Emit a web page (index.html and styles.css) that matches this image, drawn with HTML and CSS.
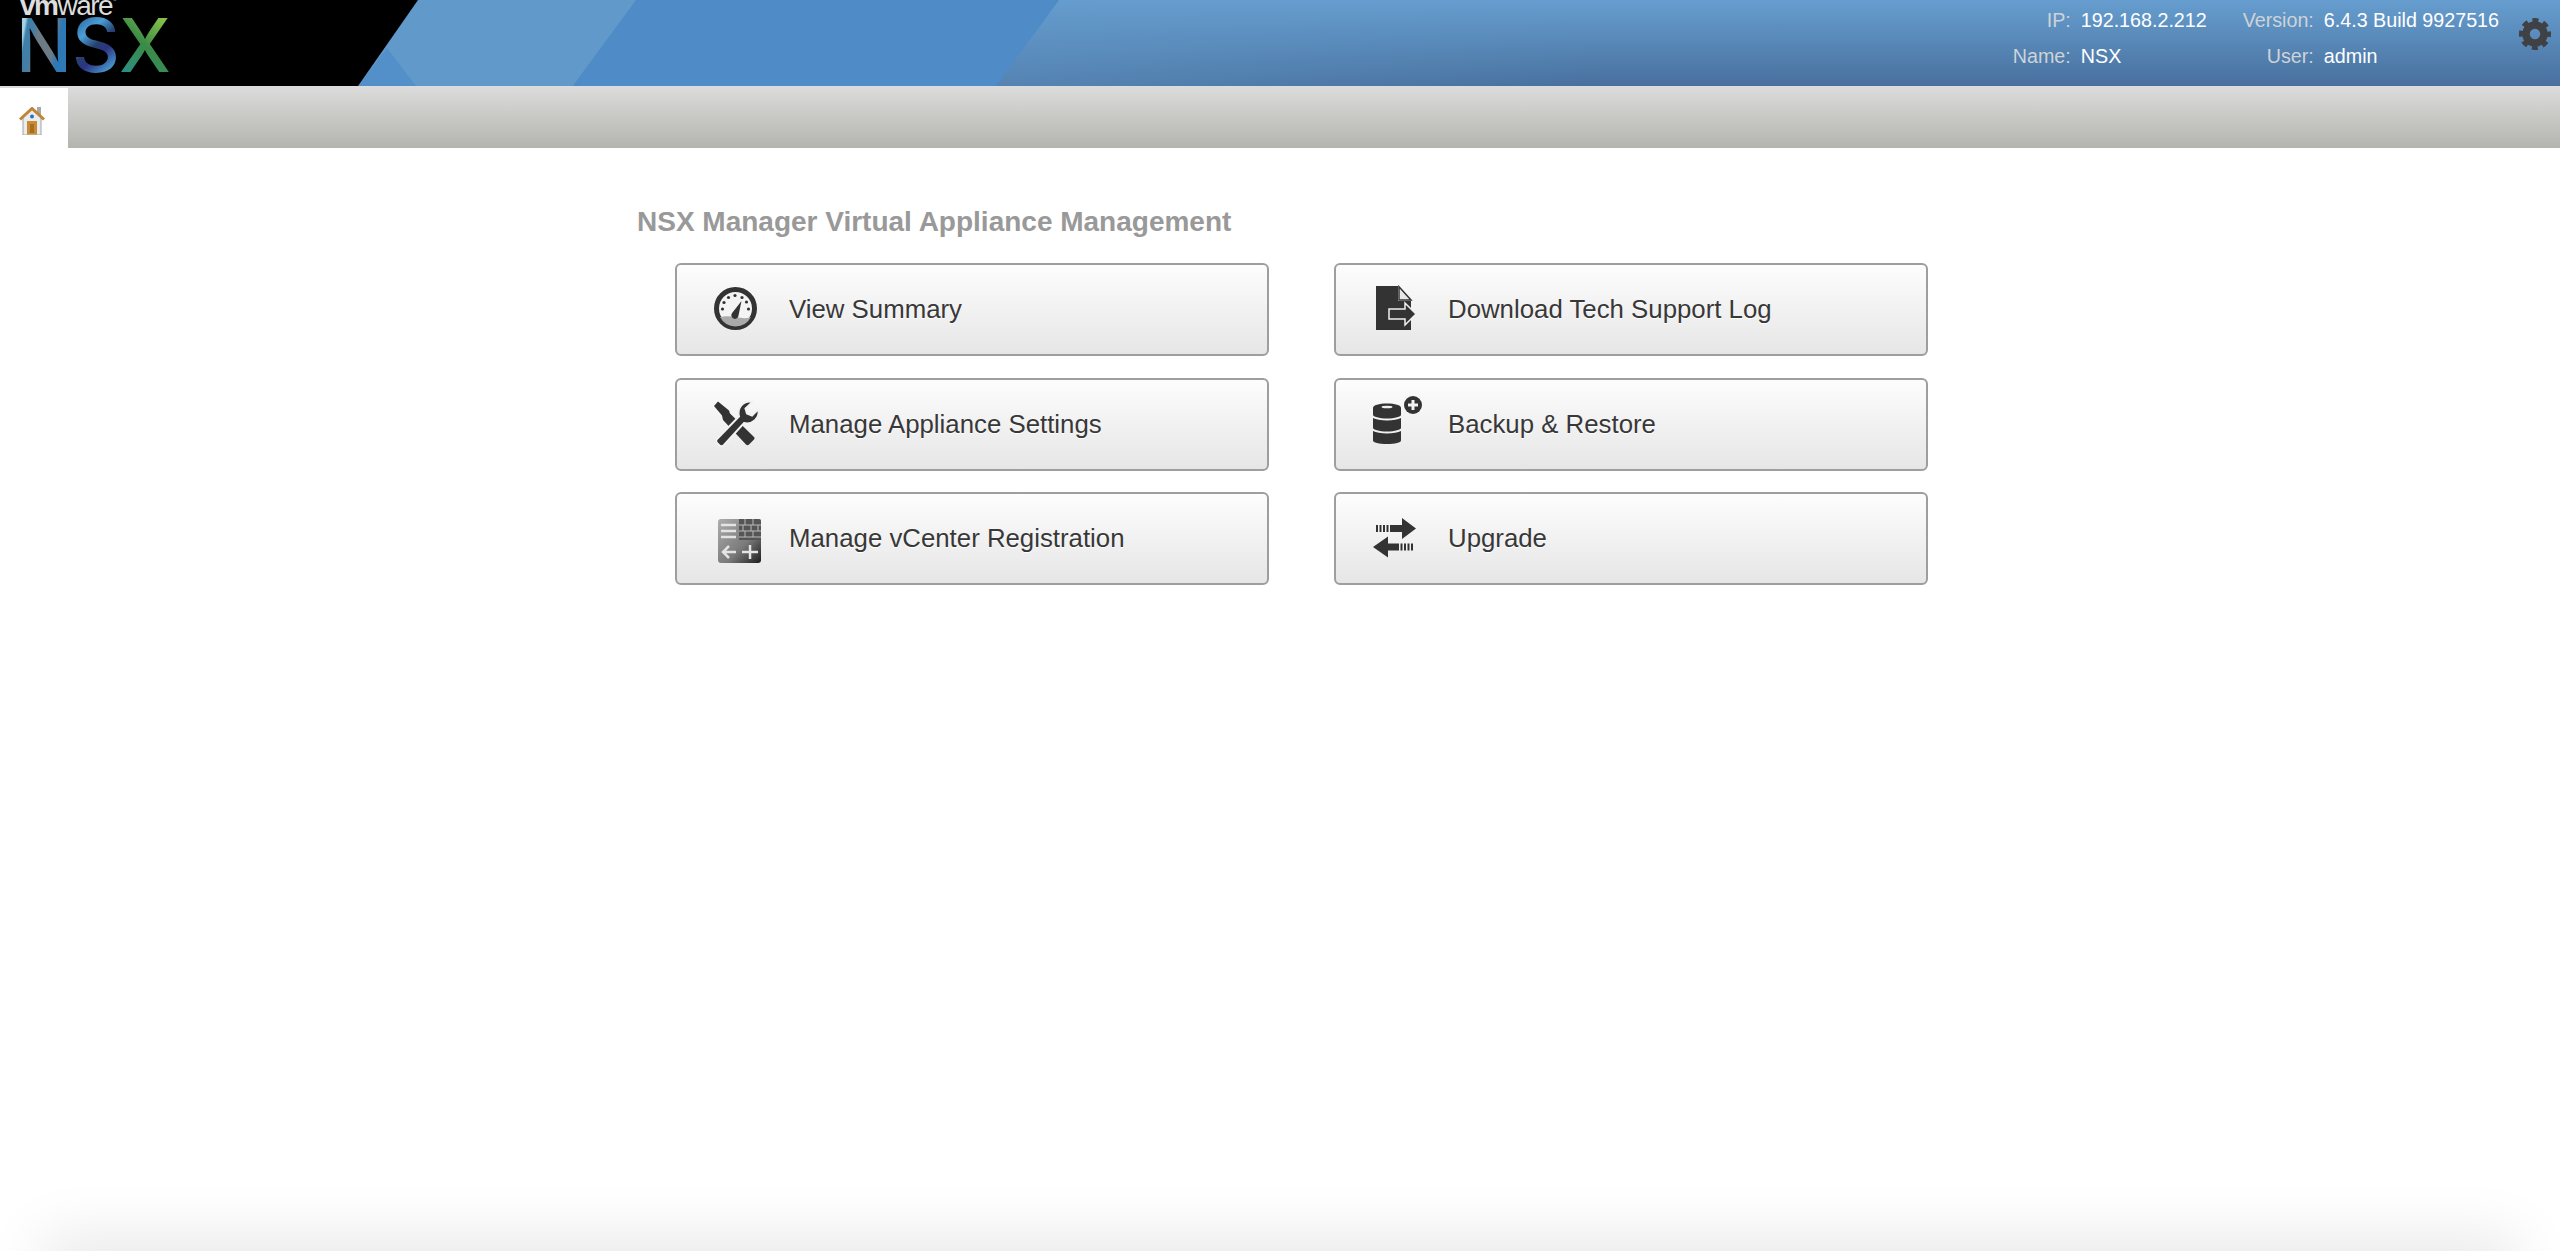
FILE: index.html
```html
<!DOCTYPE html>
<html lang="en">
  <head>
    <meta charset="UTF-8">
    <title>NSX Manager Virtual Appliance Management</title>
    <link rel="stylesheet" href="styles.css">
  </head>
  <body>
    <header class="top-bar">
      <svg class="banner-art" viewBox="0 0 1100 86" preserveAspectRatio="none" aria-hidden="true">
        <polygon points="358,86 418,0 636,0 573,86" fill="#6199cb"/>
        <polygon points="573,86 636,0 1059,0 996,86" fill="#4f8bc6"/>
        <polygon points="387,48 358,86 416,86" fill="#538fc8"/>
      </svg>
      <div class="logo">
        <span class="logo-vmware"><b>vm</b>ware<sup>®</sup></span>
        <span class="logo-nsx"><span class="n">N</span><span class="s">S</span><span class="x">X</span></span>
      </div>
      <div class="session">
        <div class="session-col">
          <div class="session-row"><span class="session-label">IP:</span><span>192.168.2.212</span></div>
          <div class="session-row"><span class="session-label">Name:</span><span>NSX</span></div>
        </div>
        <div class="session-col">
          <div class="session-row"><span class="session-label">Version:</span><span>6.4.3 Build 9927516</span></div>
          <div class="session-row"><span class="session-label">User:</span><span>admin</span></div>
        </div>
      </div>
      <svg class="gear" viewBox="0 0 32 32" aria-hidden="true">
        <circle cx="16" cy="16" r="9" fill="none" stroke="#3f4144" stroke-width="7.500"/>
        <circle cx="16" cy="16" r="13.500" fill="none" stroke="#3f4144" stroke-width="5" stroke-dasharray="5.800 4.800" stroke-dashoffset="2.900"/>
      </svg>
    </header>

    <nav class="tab-bar">
      <div class="home-tab">
        <svg class="home-icon" viewBox="0 0 26 28" aria-hidden="true">
          <rect x="18" y="0" width="4" height="8" fill="#a9a9a9"/>
          <polygon points="4,11 13,2 22,11 22,28 4,28" fill="#e9edf0" stroke="#a0a4a6"/>
          <path d="M1 12.500 13 1.500l12 11" fill="none" stroke="#bf8436" stroke-width="3"/>
          <circle cx="13" cy="9.500" r="2" fill="#2f6fc0"/>
          <rect x="8" y="14" width="10" height="13.500" fill="#c88a32"/>
          <rect x="11" y="17" width="4" height="9" fill="#a86e20"/>
        </svg>
      </div>
    </nav>

    <main class="content">
      <h1 class="page-title">NSX Manager Virtual Appliance Management</h1>
      <div class="actions">
        <a class="action">
          <svg class="action-icon" viewBox="0 0 48 48" aria-hidden="true">
            <circle cx="21.500" cy="22.500" r="19" fill="#f4f4f4" stroke="#333" stroke-width="5"/>
            <path d="M6 31a17.500 17.500 0 0 0 31 0c-5 2-10 1-15.500 0S11 30 6 31z" fill="#aaa"/>
            <g fill="#333">
              <circle cx="8.500" cy="23" r="1.600"/><circle cx="10" cy="16.500" r="1.600"/><circle cx="14.500" cy="11.500" r="1.600"/><circle cx="21" cy="9.500" r="1.600"/><circle cx="28" cy="11.500" r="1.600"/><circle cx="32.500" cy="16" r="1.600"/><circle cx="34.500" cy="23" r="1.600"/>
              <path d="M27.500 15 24.500 29.500a3.600 3.600 0 1 1-6.200-2.700z"/>
            </g>
          </svg>
          <span>View Summary</span>
        </a>
        <a class="action">
          <svg class="action-icon" viewBox="0 0 48 48" aria-hidden="true">
            <g fill="#333">
              <path d="M0 6 4 1.500l11 9 1 3 24 23.500c1 1 .5 2 0 2.500l-5 5c-1 1-2 1-3 0L9 20l-1-4.500z"/>
              <path stroke="#f2f2f2" stroke-width="2" d="M3 39 25 16.500C23 9 28 1 37 1.500l1.500.5-7 6.500 1.500 5 5 2 6.500-6.500c1.500 9-6 16-14.500 14L10 45c-2 2-3.500 1.500-5 0l-2-2c-1-1-1-3 0-4z"/>
            </g>
          </svg>
          <span>Manage Appliance Settings</span>
        </a>
        <a class="action">
          <svg class="action-icon" viewBox="0 0 48 48" aria-hidden="true">
            <defs>
              <linearGradient id="vc-fill" x1="0" y1="0" x2="1" y2="1">
                <stop offset="0" stop-color="#adadad"/>
                <stop offset=".6" stop-color="#7a7a7a"/>
                <stop offset="1" stop-color="#1c1c1c"/>
              </linearGradient>
            </defs>
            <rect x="4" y="4" width="43" height="44" rx="3" fill="url(#vc-fill)"/>
            <path d="M25 4h20a2 2 0 0 1 2 2v19H25z" fill="#555"/>
            <g stroke="#bbb" stroke-width="1" fill="none">
              <path d="M25 10h22M25 16h22M25 22h22M31 4v6M39 4v6M29 10v6M37 10v6M44 10v6M31 16v6M39 16v6"/>
            </g>
            <g stroke="#e4e4e4" stroke-width="2.500" fill="none">
              <path d="M7 10h15M7 16h15M7 22h15"/>
              <path d="M28 37h16M36 30v14M22 37H9m6-6-6 6 6 6"/>
            </g>
          </svg>
          <span>Manage vCenter Registration</span>
        </a>
        <a class="action">
          <svg class="action-icon" viewBox="0 0 48 48" aria-hidden="true">
            <path fill="#333" d="M3 0h22v15h13v29H3z"/>
            <path fill="#e8e8e8" stroke="#333" stroke-width="1.500" d="M26 .8 38 14H26z"/>
            <path fill="#333" stroke="#f0f0f0" stroke-width="1.500" d="M16 23h16v-6l11 11-11 11v-6H16z"/>
          </svg>
          <span>Download Tech Support Log</span>
        </a>
        <a class="action">
          <svg class="action-icon" viewBox="0 0 48 48" aria-hidden="true">
            <g fill="#333">
              <path d="M0 8c0-3 6-4.500 14-4.500S28 5 28 8v7c0 1.500-6 3.500-14 3.500S0 16.500 0 15z"/>
              <path d="M0 18c3 1.500 8 2.500 14 2.500s11-1 14-2.500v10c0 1.500-6 3.500-14 3.500S0 29.500 0 28z"/>
              <path d="M0 31c3 1.500 8 2.500 14 2.500S25 32.500 28 31v9.500c0 2-6 3.500-14 3.500S0 42.500 0 40.500z"/>
              <circle cx="40" cy="5" r="9"/>
            </g>
            <ellipse cx="14" cy="7" rx="5.500" ry="1.300" fill="#eee"/>
            <path d="M40 0v10M35 5h10" stroke="#f2f2f2" stroke-width="3"/>
          </svg>
          <span>Backup &amp; Restore</span>
        </a>
        <a class="action">
          <svg class="action-icon" viewBox="0 0 48 48" aria-hidden="true">
            <g fill="#333">
              <path d="M17 10h12V3l14 10.500L29 24v-7H17z"/>
              <path d="M26 28.500H15v-7L0 32l15 10.500v-7h11z"/>
            </g>
            <path d="M4 10v7M7.500 10v7M11 10v7M14.500 10v7M28.500 28.500v7M32 28.500v7M35.500 28.500v7M39 28.500v7" stroke="#333" stroke-width="2"/>
          </svg>
          <span>Upgrade</span>
        </a>
      </div>
    </main>
    <div class="bottom-glow"></div>
  </body>
</html>
```

FILE: styles.css
```css
html, body {
  height: 100%;
}

body {
  margin: 0;
  display: flex;
  flex-direction: column;
  overflow: hidden;
  background: #fff;
  font-family: "Liberation Sans", Arial, sans-serif;
}

/* top banner */
.top-bar {
  position: relative;
  display: flex;
  justify-content: flex-end;
  height: 86px;
  color: #fff;
  background:
    linear-gradient(to right, rgba(100, 156, 205, .45) 1000px, rgba(100, 156, 205, 0) 1600px),
    linear-gradient(to bottom, #669ecf, #48709e);
}

.banner-art {
  position: absolute;
  left: 0;
  top: 0;
  width: 1100px;
  height: 86px;
}

.logo {
  position: absolute;
  left: 0;
  top: 0;
  display: flex;
  flex-direction: column;
  box-sizing: border-box;
  width: 440px;
  height: 86px;
  padding-left: 20px;
  overflow: hidden;
  background: #000;
  clip-path: polygon(0 0, 418px 0, 358px 86px, 0 86px);
}

.logo-vmware {
  margin-top: -15px;
  font-size: 28px;
  line-height: 28px;
  letter-spacing: -1.500px;
  color: #ddd;
}

.logo-vmware sup {
  font-size: 7px;
  vertical-align: 14px;
}

.logo-nsx {
  margin: -3px 0 0 -4px;
  font-family: Inter, sans-serif;
  font-size: 74px;
  font-weight: 500;
  line-height: 56px;
  filter: blur(.7px);
}

.logo-nsx span {
  color: transparent;
  -webkit-background-clip: text;
  background-clip: text;
}

.logo-nsx .n {
  background-image: linear-gradient(100deg, #a6d0e4 0 18%, #3f7fa8 22% 30%, #6d7b85 40% 62%, #2e78b6 70% 100%);
}

.logo-nsx .s {
  background-image: linear-gradient(140deg, #2f6ea6 20%, #4b9fd6 35%, #27406f 50%, #2c3481 60%, #4aa3d6 80%);
}

.logo-nsx .x {
  background-image: linear-gradient(40deg, #2c8f86 15%, #3a8b47 50%, #86c04a 80%);
}

.session {
  position: relative;
  display: flex;
  margin-right: 61px;
  padding-top: 9px;
  font-size: 19.700px;
}

.session-col {
  display: grid;
  grid-template-columns: auto auto;
  grid-auto-rows: 36px;
  margin-left: 36px;
}

.session-row {
  display: contents;
}

.session-label {
  text-align: right;
  padding-right: 10px;
  color: #cdd3d8;
}

.gear {
  position: absolute;
  right: 9px;
  top: 18px;
  width: 32px;
  height: 32px;
}

/* tab strip */
.tab-bar {
  display: flex;
  height: 62px;
  background: linear-gradient(to bottom, #dcdcdc, #b4b4af);
}

.home-tab {
  display: flex;
  align-items: center;
  width: 68px;
  box-sizing: border-box;
  margin-top: 2px;
  padding: 6px 0 0 19px;
  background: #fff;
}

.home-icon {
  width: 26px;
  height: 28px;
}

/* main panel */
.content {
  flex: 1;
  padding: 57px 0 0 637px;
}

.page-title {
  margin: 0;
  font-size: 28px;
  line-height: 34px;
  font-weight: bold;
  color: #999;
}

.actions {
  display: grid;
  grid-template-columns: 594px 594px;
  grid-template-rows: repeat(3, 93px);
  grid-auto-flow: column;
  column-gap: 65px;
  row-gap: 21.500px;
  margin: 24px 0 0 38px;
}

.action {
  display: flex;
  align-items: center;
  box-sizing: border-box;
  padding-left: 37px;
  border: 2px solid #9e9e9e;
  border-radius: 6px;
  background: linear-gradient(to bottom, #fdfdfd, #e6e6e6);
  color: #383838;
  font-size: 25.800px;
  text-shadow: 0 1px 1px #fff;
}

.action-icon {
  flex: none;
  width: 48px;
  height: 48px;
  margin-right: 27px;
  overflow: visible;
}

.bottom-glow {
  position: absolute;
  left: 56px;
  right: 56px;
  bottom: -40px;
  height: 40px;
  box-shadow: 0 0 60px 14px #e8e8e8;
}
```
